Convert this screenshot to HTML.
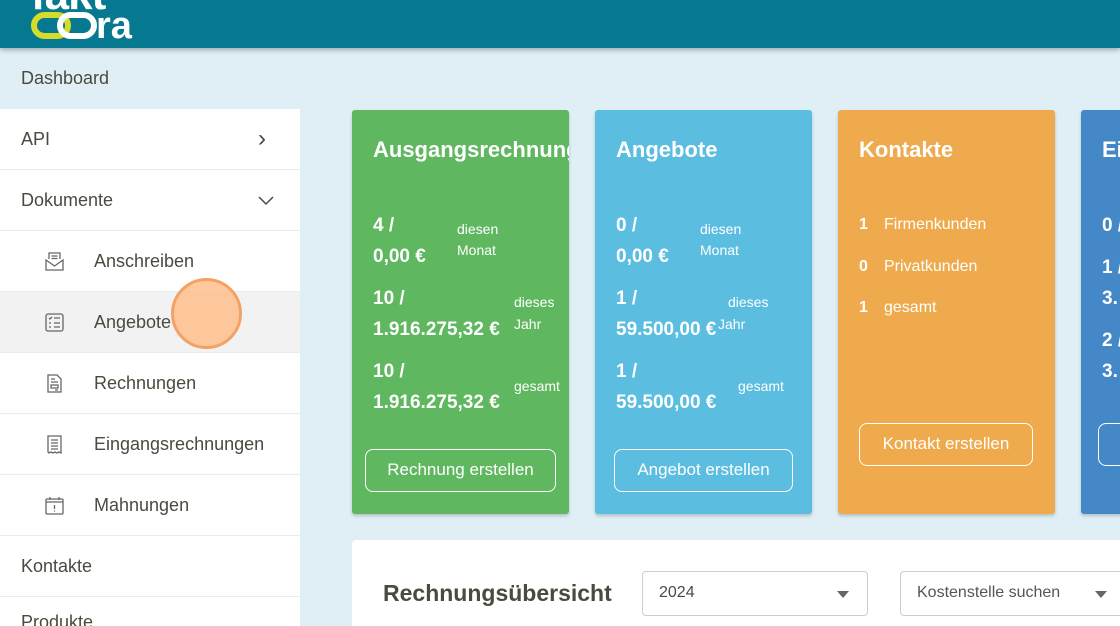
<!DOCTYPE html>
<html style="width:1120px;height:626px;overflow:hidden"><head><meta charset="utf-8"><style>
*{box-sizing:border-box;margin:0;padding:0}
body{width:1120px;height:626px;overflow:hidden;background:#e0eff6;font-family:"Liberation Sans",Roboto,sans-serif;position:relative;color:#4a4a3f}
.hdr{position:absolute;left:0;top:0;width:1120px;height:48px;background:#06788f;box-shadow:0 2px 5px rgba(0,0,0,.3);z-index:2;overflow:hidden}
.side{position:absolute;left:0;top:48px;width:300px;height:578px;background:#fff}
.dash{position:absolute;left:0;top:48px;width:300px;height:61px;background:#e0eff6;font-size:18px;padding:20px 21px}
.it{position:absolute;left:0;width:300px;height:61px;border-bottom:1px solid #e3edf2;font-size:18px;line-height:61px;padding-left:21px;background:#fff}
.sub{padding-left:94px}
.ic{position:absolute;left:44px;top:20px;width:21px;height:21px}
.card{position:absolute;top:110px;width:217px;height:404px;border-radius:3px;color:#fff;box-shadow:0 2px 3px rgba(0,0,0,.2);overflow:hidden}
.card h2{position:absolute;left:21px;top:27px;font-size:22px;font-weight:bold;white-space:nowrap}
.v{position:absolute;left:21px;font-size:19px;font-weight:bold;line-height:31px;white-space:nowrap}
.l{position:absolute;font-size:14px;line-height:21px}
.btn{position:absolute;border:1.5px solid #fff;border-radius:8px;font-size:17px;text-align:center;line-height:40px;height:43px}
.kr{position:absolute;left:21px;font-size:16px}
.kr b{display:inline-block;width:25px}
</style></head><body>
<div class="hdr">
<div style="position:absolute;left:31px;top:-30px;font-size:44px;font-weight:bold;color:#fff;letter-spacing:-1px">fakt</div>
<svg style="position:absolute;left:30px;top:8px" width="112" height="34"><rect x="4" y="7" width="34" height="21" rx="10.5" fill="none" stroke="#d6dc2a" stroke-width="6"/><rect x="30" y="7" width="34" height="21" rx="10.5" fill="none" stroke="#fff" stroke-width="6"/><text x="66" y="30" font-size="38" font-weight="bold" fill="#fff" font-family="Liberation Sans">ra</text></svg>
</div>
<div class="side"></div>
<div class="dash">Dashboard</div>
<div class="it" style="top:109px">API<span style="position:absolute;left:258px;top:-1px;font-size:24px">&#8250;</span></div>
<div class="it" style="top:170px">Dokumente<svg style="position:absolute;left:258px;top:26px" width="16" height="10"><path d="M1 1l7 7 7-7" fill="none" stroke="#4a4a3f" stroke-width="1.5"/></svg></div>
<div class="it sub" style="top:231px"><svg class="ic" viewBox="0 0 21 21" fill="none" stroke="#666" stroke-width="1.3"><path d="M5 8V2h11v6M2 9l8.5 6L19 9v10H2z M7.5 5h6M7.5 7.5h6"/></svg>Anschreiben</div>
<div class="it sub" style="top:292px;background:#f2f2f2"><svg class="ic" viewBox="0 0 21 21" fill="none" stroke="#666" stroke-width="1.3"><rect x="2" y="2" width="17" height="17" rx="2"/><path d="M5 6l1 1 2-2M10 6h6M5 11h2M10 11h6M5 15h2M10 15h6"/></svg>Angebote</div>
<div class="it sub" style="top:353px"><svg class="ic" viewBox="0 0 21 21" fill="none" stroke="#666" stroke-width="1.3"><path d="M4 2h9l4 4v13H4z M7 6h4M7 9h7M7 12h7v3H7z M11 17h3"/></svg>Rechnungen</div>
<div class="it sub" style="top:414px"><svg class="ic" viewBox="0 0 21 21" fill="none" stroke="#666" stroke-width="1.3"><path d="M4 2h13v17l-2-1-2 1-2-1-2 1-2-1-2 1-1-1z M7 6h7M7 9h7M7 12h7M7 15h7"/></svg>Eingangsrechnungen</div>
<div class="it sub" style="top:475px"><svg class="ic" viewBox="0 0 21 21" fill="none" stroke="#666" stroke-width="1.3"><rect x="2" y="4" width="17" height="15" rx="1"/><path d="M2 7h17M6 2v3M15 2v3M10.5 10v4M10.5 15.5v1"/></svg>Mahnungen</div>
<div class="it" style="top:536px">Kontakte</div>
<div class="it" style="top:597px;height:29px;line-height:50px;overflow:hidden;border:0">Produkte</div>
<div style="position:absolute;left:171px;top:278px;width:71px;height:71px;border-radius:50%;background:rgba(255,190,140,.85);border:3px solid #f3a266"></div>

<div class="card" style="left:352px;background:#5fb760">
<h2>Ausgangsrechnungen</h2>
<div class="v" style="top:100px">4 /<br>0,00 €</div><div class="l" style="left:105px;top:109px">diesen<br>Monat</div>
<div class="v" style="top:173px">10 /<br>1.916.275,32 €</div><div class="l" style="left:162px;top:182px">dieses</div><div class="l" style="left:162px;top:204px">Jahr</div>
<div class="v" style="top:246px">10 /<br>1.916.275,32 €</div><div class="l" style="left:162px;top:266px">gesamt</div>
<div class="btn" style="left:13px;top:339px;width:191px">Rechnung erstellen</div>
</div>
<div class="card" style="left:595px;background:#5bbde0">
<h2>Angebote</h2>
<div class="v" style="top:100px">0 /<br>0,00 €</div><div class="l" style="left:105px;top:109px">diesen<br>Monat</div>
<div class="v" style="top:173px">1 /<br>59.500,00 €</div><div class="l" style="left:133px;top:182px">dieses</div><div class="l" style="left:123px;top:204px">Jahr</div>
<div class="v" style="top:246px">1 /<br>59.500,00 €</div><div class="l" style="left:143px;top:266px">gesamt</div>
<div class="btn" style="left:19px;top:339px;width:179px">Angebot erstellen</div>
</div>
<div class="card" style="left:838px;background:#eeaa4c">
<h2>Kontakte</h2>
<div class="kr" style="top:106px"><b>1</b>Firmenkunden</div>
<div class="kr" style="top:148px"><b>0</b>Privatkunden</div>
<div class="kr" style="top:189px"><b>1</b>gesamt</div>
<div class="btn" style="left:21px;top:313px;width:174px">Kontakt erstellen</div>
</div>
<div class="card" style="left:1081px;background:#4588c8">
<h2>Eingangsrechnungen</h2>
<div class="v" style="top:100px">0 /</div>
<div class="v" style="top:142px">1 /<br>3.</div>
<div class="v" style="top:215px">2 /<br>3.</div>
<div class="btn" style="left:17px;top:313px;width:180px"></div>
</div>

<div style="position:absolute;left:352px;top:540px;width:768px;height:86px;background:#fff;border-radius:4px 0 0 0"></div>
<div style="position:absolute;left:383px;top:580px;font-size:23px;font-weight:bold;color:#4a4a3f">Rechnungsübersicht</div>
<div style="position:absolute;left:642px;top:571px;width:226px;height:45px;border:1px solid #ccc;border-radius:4px;font-size:16px;padding:12px 16px">2024<span style="position:absolute;right:18px;top:19px;border:6px solid transparent;border-top:7px solid #666"></span></div>
<div style="position:absolute;left:900px;top:571px;width:220px;height:45px;border:1px solid #ccc;border-right:0;border-radius:4px 0 0 4px;font-size:16px;padding:12px 16px;color:#555">Kostenstelle suchen<span style="position:absolute;left:194px;top:19px;border:6px solid transparent;border-top:7px solid #666"></span></div>
</body></html>
